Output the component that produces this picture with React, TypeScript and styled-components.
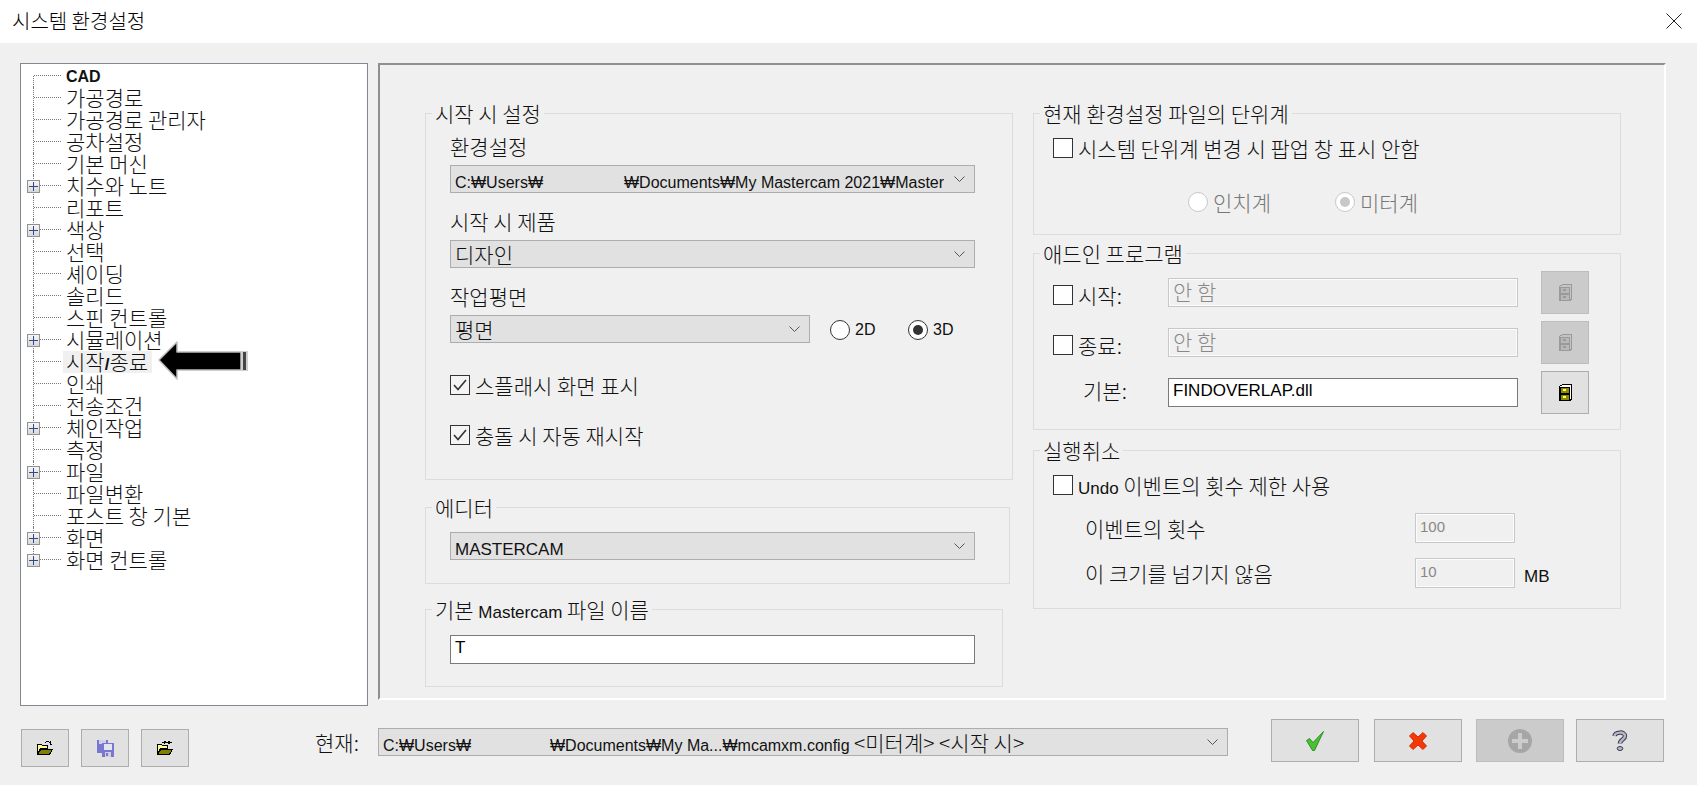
import React from "react";
import styled, { createGlobalStyle } from "styled-components";

const GlobalStyle = createGlobalStyle`
  html, body {
    margin: 0;
    padding: 0;
    background: #f0f0f0;
    overflow: hidden;
  }
  * {
    box-sizing: border-box;
  }
`;

const Dialog = styled.div`
  width: 1697px;
  height: 785px;
  display: flex;
  flex-direction: column;
  background: #f0f0f0;
  color: #111;
  font-family: "Noto Sans CJK KR", sans-serif;
  font-size: 21px;
  line-height: 22px;
  font-weight: 300;
`;

const TitleBar = styled.div`
  height: 43px;
  flex: none;
  display: flex;
  align-items: center;
  justify-content: space-between;
  padding: 0 15px 2px 12px;
  background: #fff;
`;

const Title = styled.div`
  font-size: 20px;
  color: #000;
`;

const Main = styled.div`
  height: 663px;
  flex: none;
  display: flex;
  gap: 10px;
  padding: 20px 0 0 20px;
`;

const Tree = styled.ul`
  width: 348px;
  height: 643px;
  margin: 0;
  padding: 1px 0 0;
  list-style: none;
  background: #fff;
  border: 1px solid #828790;
`;

const TreeRow = styled.li<{ $first?: boolean; $last?: boolean }>`
  position: relative;
  height: 22px;
  display: flex;
  align-items: center;
  padding-left: 42px;

  &::before {
    content: "";
    position: absolute;
    left: 12px;
    top: ${({ $first }) => ($first ? "11px" : "0")};
    bottom: ${({ $last }) => ($last ? "11px" : "0")};
    border-left: 1px dotted #777;
  }

  &::after {
    content: "";
    position: absolute;
    left: 13px;
    width: 27px;
    top: 10px;
    border-top: 1px dotted #777;
  }
`;

const TreeLabel = styled.span<{ $selected?: boolean }>`
  padding: 0 4px 0 3px;
  height: 22px;
  line-height: 20px;
  white-space: pre;
  background: ${({ $selected }) => ($selected ? "#f0f0f0" : "transparent")};
`;

const Expander = styled.span`
  position: absolute;
  z-index: 1;
  left: 6px;
  top: 5px;
  width: 13px;
  height: 13px;
  border: 1px solid #919191;
  background: linear-gradient(#f6f6f6, #d8d8d8);

  &::before {
    content: "";
    position: absolute;
    left: 1px;
    right: 1px;
    top: 5px;
    height: 1px;
    background: #2f4a87;
  }

  &::after {
    content: "";
    position: absolute;
    top: 1px;
    bottom: 1px;
    left: 5px;
    width: 1px;
    background: #2f4a87;
  }
`;

const ArrowMark = styled.div`
  position: absolute;
  z-index: 2;
  left: 136px;
  top: -10px;
  line-height: 0;
`;

const Latin = styled.span<{ $size?: number; $bold?: boolean }>`
  font-family: "Liberation Sans", sans-serif;
  font-size: ${({ $size }) => $size ?? 17}px;
  font-weight: ${({ $bold }) => ($bold ? 700 : 400)};
  line-height: 1;
`;

const RootLabel = styled(Latin)`
  vertical-align: 2px;
`;

const Panel = styled.div`
  width: 1288px;
  height: 637px;
  display: flex;
  gap: 20px;
  padding: 37px 0 0 45px;
  border-style: solid;
  border-width: 2px;
  border-color: #8f8f8f #fff #fff #8f8f8f;
`;

const Column = styled.div`
  width: 588px;
  display: flex;
  flex-direction: column;
  align-items: flex-start;
`;

const Group = styled.fieldset<{ $width?: number; $top?: number }>`
  width: ${({ $width }) => $width ?? 588}px;
  margin: ${({ $top }) => $top ?? 0}px 0 0;
  padding: 0;
  min-width: 0;
  border: 1px solid #dcdcdc;
`;

const Legend = styled.legend`
  margin-left: 6px;
  padding: 0 3px;
  line-height: 22px;
  white-space: pre;
`;

const GroupBody = styled.div<{ $pad: string }>`
  padding: ${({ $pad }) => $pad};
`;

const FieldStack = styled.div`
  display: flex;
  flex-direction: column;
  gap: 6px;
  margin-bottom: 19px;
`;

const FieldLabel = styled.div`
  margin: -2px 0 2px;
`;

const PlaneRow = styled.div`
  display: flex;
  align-items: center;
`;

const Combo = styled.div<{ $width?: number }>`
  width: ${({ $width }) => $width ?? 525}px;
  height: 28px;
  flex: none;
  display: flex;
  align-items: center;
  padding: 0 9px 0 4px;
  background: #e1e1e1;
  border: 1px solid #adadad;
`;

const ComboText = styled.div`
  flex: 1;
  overflow: hidden;
  white-space: nowrap;
  margin-right: 10px;
`;

const Redacted = styled.span<{ $width: number }>`
  display: inline-block;
  width: ${({ $width }) => $width}px;
`;

const Chevron = () => (
  <svg width="11" height="6" viewBox="0 0 11 6" fill="none">
    <path d="M0.5 0.5 5.5 5.5 10.5 0.5" stroke="#555" strokeWidth="1" />
  </svg>
);

const CheckLine = styled.div<{ $top?: number }>`
  display: flex;
  align-items: center;
  gap: 5px;
  height: 20px;
  margin-top: ${({ $top }) => $top ?? 0}px;
  white-space: pre;
`;

const Box = styled.span<{ $checked?: boolean }>`
  width: 20px;
  height: 20px;
  flex: none;
  display: flex;
  align-items: center;
  justify-content: center;
  border: 1px solid #333;
  background: ${({ $checked }) => ($checked ? "#f4f4f4" : "#fff")};
`;

const CheckBox = ({ checked }: { checked?: boolean }) => (
  <Box $checked={checked}>
    {checked && (
      <svg width="14" height="12" viewBox="0 0 14 12" fill="none">
        <path d="M1 6 5 10.5 13 1" stroke="#333" strokeWidth="1.6" />
      </svg>
    )}
  </Box>
);

const RadioDot = styled.span<{ $on?: boolean; $off?: boolean }>`
  width: 20px;
  height: 20px;
  flex: none;
  display: flex;
  align-items: center;
  justify-content: center;
  border-radius: 50%;
  background: #fff;
  border: 1px solid ${({ $off }) => ($off ? "#c8c8c8" : "#333")};

  &::after {
    content: "";
    display: ${({ $on }) => ($on ? "block" : "none")};
    width: 10px;
    height: 10px;
    border-radius: 50%;
    background: ${({ $off }) => ($off ? "#c8c8c8" : "#333")};
  }
`;

const RadioItem = styled.div<{ $width: number; $off?: boolean }>`
  width: ${({ $width }) => $width}px;
  display: flex;
  align-items: center;
  gap: 5px;
  color: ${({ $off }) => ($off ? "#777" : "inherit")};
`;

const PlaneRadios = styled.div`
  display: flex;
  margin: 2px 0 0 20px;
`;

const UnitRadios = styled.div`
  display: flex;
  margin: 33px 0 0 135px;
`;

const AddinRow = styled.div`
  display: grid;
  grid-template-columns: 115px 350px 71px;
  align-items: center;
  margin-bottom: 7px;
  width: 536px;

  & > :last-child {
    margin-left: 23px;
  }
`;

const RowLabel = styled.div`
  padding-left: 30px;
  margin-top: -5px;
`;

const AddinCheck = styled(CheckLine)`
  margin-top: 5px;
`;

const TextField = styled.div<{ $off?: boolean; $width?: number; $height?: number }>`
  width: ${({ $width }) => ($width ? `${$width}px` : "auto")};
  height: ${({ $height }) => $height ?? 29}px;
  display: flex;
  align-items: center;
  padding: 0 4px 4px;
  white-space: pre;
  background: ${({ $off }) => ($off ? "#f0f0f0" : "#fff")};
  color: ${({ $off }) => ($off ? "#888" : "#000")};
  border: 1px solid ${({ $off }) => ($off ? "#c8c8c8" : "#7a7a7a")};
  box-shadow: ${({ $off }) => ($off ? "inset 0 0 0 1px #fbfbfb" : "none")};
`;

const IconButton = styled.div<{ $off?: boolean }>`
  width: 48px;
  height: 43px;
  display: flex;
  align-items: center;
  justify-content: center;
  background: ${({ $off }) => ($off ? "#cbcbcb" : "#e1e1e1")};
  border: 1px solid ${({ $off }) => ($off ? "#bdbdbd" : "#adadad")};
`;

const UndoRow = styled.div<{ $top: number }>`
  display: grid;
  grid-template-columns: 330px 100px auto;
  align-items: center;
  margin-top: ${({ $top }) => $top}px;
  padding-left: 32px;
`;

const UnitText = styled.div`
  padding-left: 9px;
`;

const BottomBar = styled.div`
  flex: 1;
  display: flex;
  align-items: flex-start;
`;

const FileButtons = styled.div`
  display: flex;
  gap: 12px;
  margin: 23px 0 0 21px;
`;

const ToolButton = styled(IconButton)`
  height: 38px;
`;

const CurrentRow = styled.div`
  display: flex;
  align-items: center;
  gap: 20px;
  margin: 22px 0 0 126px;
`;

const CurrentLabel = styled.div`
  width: 43px;
  white-space: nowrap;
`;

const ActionButtons = styled.div`
  display: flex;
  margin: 13px 0 0 43px;
`;

const ActionButton = styled(IconButton)<{ $gap?: number }>`
  width: 88px;
  margin-left: ${({ $gap }) => $gap ?? 0}px;
`;

const treeItems: { text: React.ReactNode; plus?: boolean; selected?: boolean }[] = [
  { text: <RootLabel $bold $size={16}>CAD</RootLabel> },
  { text: "가공경로" },
  { text: "가공경로 관리자" },
  { text: "공차설정" },
  { text: "기본 머신" },
  { text: "치수와 노트", plus: true },
  { text: "리포트" },
  { text: "색상", plus: true },
  { text: "선택" },
  { text: "셰이딩" },
  { text: "솔리드" },
  { text: "스핀 컨트롤" },
  { text: "시뮬레이션", plus: true },
  { text: <>시작<Latin $bold>/</Latin>종료</>, selected: true },
  { text: "인쇄" },
  { text: "전송조건" },
  { text: "체인작업", plus: true },
  { text: "측정" },
  { text: "파일", plus: true },
  { text: "파일변환" },
  { text: "포스트 창 기본" },
  { text: "화면", plus: true },
  { text: "화면 컨트롤", plus: true },
];

const CloseIcon = () => (
  <svg width="16" height="16" viewBox="0 0 16 16" fill="none">
    <path d="M0.5 0.5 15.500 15.500M15.500 0.5 0.5 15.500" stroke="#222" strokeWidth="1" />
  </svg>
);

const OpenFolder = ({ swap }: { swap?: boolean }) => (
  <svg width="16" height="14" viewBox="0 0 16 14" shapeRendering="crispEdges">
    {swap ? (
      <path d="M5 1.500h4M7 0l2 1.500-2 1.500M11 1.500h4M13 0l-2 1.500 2 1.500" stroke="#000" fill="none" />
    ) : (
      <path d="M8 2c1-2 4-2 5 0M13 0v3h2" stroke="#000" fill="none" />
    )}
    <path d="M0.5 3.500h4l1 1h5v3h-7l-3 6z" fill="#ffff90" stroke="#000" />
    <path d="M0.5 13.500 4 8.500h11.500l-3 5z" fill="#808000" stroke="#000" />
  </svg>
);

const SaveStack = () => (
  <svg width="17" height="17" viewBox="0 0 17 17" shapeRendering="crispEdges">
    <rect x="0" y="0" width="11" height="13" fill="#7878d0" />
    <rect x="2" y="0" width="7" height="4" fill="#d0d0ee" />
    <rect x="5" y="3" width="12" height="14" fill="#7878d0" />
    <rect x="7" y="4" width="8" height="6" fill="#e4e4f0" />
    <rect x="8" y="12" width="6" height="5" fill="#d0d0dc" />
    <rect x="9" y="13" width="2" height="3" fill="#7878d0" />
  </svg>
);

const Cabinet = ({ off }: { off?: boolean }) => {
  const line = off ? "#9a9a9a" : "#000";
  const drawer = off ? "#b8b8b8" : "#8a8a00";
  const handle = off ? "#9a9a9a" : "#ffff60";
  return (
    <svg width="13" height="17" viewBox="0 0 13 17" shapeRendering="crispEdges">
      <path d="M3.500 .5h9v15l-2 1h-10v-14z" fill={off ? "#c4c4c4" : "#fff"} stroke={line} />
      <rect x="1" y="3" width="9" height="6" fill={drawer} stroke={line} />
      <rect x="1" y="10" width="9" height="6" fill={drawer} stroke={line} />
      <rect x="4" y="5" width="3" height="2" fill={handle} />
      <rect x="4" y="12" width="3" height="2" fill={handle} />
    </svg>
  );
};

const GreenCheck = () => (
  <svg width="18" height="20" viewBox="0 0 18 20">
    <path d="M0.5 9.500 3.500 7.500 7 11.500 17.500 0.5 8.500 19.500 6.500 19.500z" fill="#4cc034" stroke="#12800e" strokeWidth="0.8" />
  </svg>
);

const RedCross = () => (
  <svg width="18" height="18" viewBox="0 0 18 18">
    <path d="M4 0.5 9 5 14 0.5 17.500 4 13 9 17.500 14 14 17.500 9 13 4 17.500 0.5 14 5 9 0.5 4z" fill="#f03a08" stroke="#e02a00" strokeWidth="1" />
  </svg>
);

const GrayPlus = () => (
  <svg width="24" height="24" viewBox="0 0 24 24">
    <circle cx="12" cy="12" r="12" fill="#a6a6a6" />
    <path d="M12 4v16M4 12h16" stroke="#cbcbcb" strokeWidth="4" />
  </svg>
);

const HelpMark = () => (
  <svg width="16" height="21" viewBox="0 0 16 21" fill="none">
    <path d="M2.500 6C3 2 13 1 13 6c0 3.500-5 3.500-5 7.500" stroke="#3c3c52" strokeWidth="4.500" />
    <path d="M2.500 6C3 2 13 1 13 6c0 3.500-5 3.500-5 7.500" stroke="#b6b6c8" strokeWidth="2.500" />
    <ellipse cx="8" cy="18.500" rx="2.800" ry="2" fill="#b6b6c8" stroke="#3c3c52" />
  </svg>
);

const BlockArrow = () => (
  <svg width="92" height="40" viewBox="0 0 92 40">
    <path d="M2 19 20 1V11H84V29H20V38Z" fill="#000" stroke="#bdbdbd" strokeWidth="1.500" strokeLinejoin="round" />
    <rect x="84" y="10" width="7" height="20" fill="#cfcfcf" />
    <rect x="86" y="11" width="3" height="18" fill="#444" />
  </svg>
);

export default function App() {
  return (
    <>
      <GlobalStyle />
      <Dialog>
        <TitleBar>
          <Title>시스템 환경설정</Title>
          <CloseIcon />
        </TitleBar>

        <Main>
          <Tree>
            {treeItems.map((item, index) => (
              <TreeRow key={index} $first={index === 0} $last={index === treeItems.length - 1}>
                {item.plus && <Expander />}
                <TreeLabel $selected={item.selected}>{item.text}</TreeLabel>
                {item.selected && (
                  <ArrowMark>
                    <BlockArrow />
                  </ArrowMark>
                )}
              </TreeRow>
            ))}
          </Tree>

          <Panel>
            <Column>
              <Group>
                <Legend>시작 시 설정</Legend>
                <GroupBody $pad="13px 24px 34px">
                  <FieldStack>
                    <FieldLabel>환경설정</FieldLabel>
                    <Combo>
                      <ComboText>
                        <Latin $size={16}>C:₩Users₩<Redacted $width={81} />₩Documents₩My Mastercam 2021₩Master</Latin>
                      </ComboText>
                      <Chevron />
                    </Combo>
                  </FieldStack>
                  <FieldStack>
                    <FieldLabel>시작 시 제품</FieldLabel>
                    <Combo>
                      <ComboText>디자인</ComboText>
                      <Chevron />
                    </Combo>
                  </FieldStack>
                  <FieldStack>
                    <FieldLabel>작업평면</FieldLabel>
                    <PlaneRow>
                      <Combo $width={360}>
                        <ComboText>평면</ComboText>
                        <Chevron />
                      </Combo>
                      <PlaneRadios>
                        <RadioItem $width={78}>
                          <RadioDot />
                          <Latin $size={16}>2D</Latin>
                        </RadioItem>
                        <RadioItem $width={50}>
                          <RadioDot $on />
                          <Latin $size={16}>3D</Latin>
                        </RadioItem>
                      </PlaneRadios>
                    </PlaneRow>
                  </FieldStack>
                  <CheckLine $top={32}>
                    <CheckBox checked />
                    스플래시 화면 표시
                  </CheckLine>
                  <CheckLine $top={30}>
                    <CheckBox checked />
                    충돌 시 자동 재시작
                  </CheckLine>
                </GroupBody>
              </Group>

              <Group $width={585} $top={16}>
                <Legend>에디터</Legend>
                <GroupBody $pad="14px 24px 23px">
                  <Combo>
                    <ComboText>
                      <Latin>MASTERCAM</Latin>
                    </ComboText>
                    <Chevron />
                  </Combo>
                </GroupBody>
              </Group>

              <Group $width={578} $top={14}>
                <Legend>
                  기본 <Latin>Mastercam</Latin> 파일 이름
                </Legend>
                <GroupBody $pad="14px 24px 22px">
                  <TextField $width={525}>
                    <Latin>T</Latin>
                  </TextField>
                </GroupBody>
              </Group>
            </Column>

            <Column>
              <Group>
                <Legend>현재 환경설정 파일의 단위계</Legend>
                <GroupBody $pad="14px 19px 21px">
                  <CheckLine>
                    <CheckBox />
                    시스템 단위계 변경 시 팝업 창 표시 안함
                  </CheckLine>
                  <UnitRadios>
                    <RadioItem $width={147} $off>
                      <RadioDot $off />
                      인치계
                    </RadioItem>
                    <RadioItem $width={90} $off>
                      <RadioDot $off $on />
                      미터계
                    </RadioItem>
                  </UnitRadios>
                </GroupBody>
              </Group>

              <Group $top={7}>
                <Legend>애드인 프로그램</Legend>
                <GroupBody $pad="7px 19px 8px">
                  <AddinRow>
                    <AddinCheck>
                      <CheckBox />
                      시작:
                    </AddinCheck>
                    <TextField $off>안 함</TextField>
                    <IconButton $off>
                      <Cabinet off />
                    </IconButton>
                  </AddinRow>
                  <AddinRow>
                    <AddinCheck>
                      <CheckBox />
                      종료:
                    </AddinCheck>
                    <TextField $off>안 함</TextField>
                    <IconButton $off>
                      <Cabinet off />
                    </IconButton>
                  </AddinRow>
                  <AddinRow>
                    <RowLabel>기본:</RowLabel>
                    <TextField>
                      <Latin>FINDOVERLAP.dll</Latin>
                    </TextField>
                    <IconButton>
                      <Cabinet />
                    </IconButton>
                  </AddinRow>
                </GroupBody>
              </Group>

              <Group $top={9}>
                <Legend>실행취소</Legend>
                <GroupBody $pad="14px 19px 20px">
                  <CheckLine>
                    <CheckBox />
                    <span>
                      <Latin>Undo</Latin> 이벤트의 횟수 제한 사용
                    </span>
                  </CheckLine>
                  <UndoRow $top={18}>
                    <div>이벤트의 횟수</div>
                    <TextField $off $height={30}>
                      <Latin $size={15}>100</Latin>
                    </TextField>
                  </UndoRow>
                  <UndoRow $top={15}>
                    <div>이 크기를 넘기지 않음</div>
                    <TextField $off $height={30}>
                      <Latin $size={15}>10</Latin>
                    </TextField>
                    <UnitText>
                      <Latin>MB</Latin>
                    </UnitText>
                  </UndoRow>
                </GroupBody>
              </Group>
            </Column>
          </Panel>
        </Main>

        <BottomBar>
          <FileButtons>
            <ToolButton>
              <OpenFolder />
            </ToolButton>
            <ToolButton>
              <SaveStack />
            </ToolButton>
            <ToolButton>
              <OpenFolder swap />
            </ToolButton>
          </FileButtons>

          <CurrentRow>
            <CurrentLabel>현재:</CurrentLabel>
            <Combo $width={850}>
              <ComboText>
                <Latin $size={16}>C:₩Users₩<Redacted $width={79} />₩Documents₩My Ma...₩mcamxm.config </Latin>
                {"<미터계> <시작 시>"}
              </ComboText>
              <Chevron />
            </Combo>
          </CurrentRow>

          <ActionButtons>
            <ActionButton>
              <GreenCheck />
            </ActionButton>
            <ActionButton $gap={15}>
              <RedCross />
            </ActionButton>
            <ActionButton $gap={14} $off>
              <GrayPlus />
            </ActionButton>
            <ActionButton $gap={12}>
              <HelpMark />
            </ActionButton>
          </ActionButtons>
        </BottomBar>
      </Dialog>
    </>
  );
}
